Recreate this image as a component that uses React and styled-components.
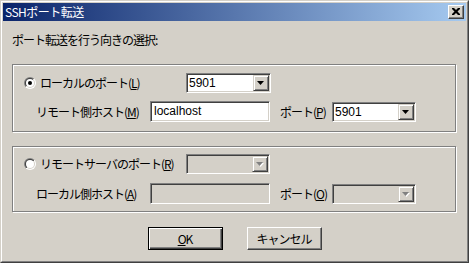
import styled, { createGlobalStyle } from "styled-components";

const GlobalStyle = createGlobalStyle`
  html, body {
    margin: 0;
    padding: 0;
    background: #ffffff;
  }
  body {
    font-family: "Noto Sans CJK JP", "Noto Sans", sans-serif;
    font-size: 12px;
    color: #000;
  }
`;

const Radio = ({ checked }) => (
  <RadioBox width="12" height="12" viewBox="0 0 12 12">
    <defs>
      <linearGradient id="rOuter" x1="0" y1="0" x2="1" y2="1">
        <stop offset="0.5" stopColor="#808080" />
        <stop offset="0.5" stopColor="#ffffff" />
      </linearGradient>
      <linearGradient id="rInner" x1="0" y1="0" x2="1" y2="1">
        <stop offset="0.5" stopColor="#404040" />
        <stop offset="0.5" stopColor="#d4d0c8" />
      </linearGradient>
    </defs>
    <circle cx="6" cy="6" r="6" fill="url(#rOuter)" />
    <circle cx="6" cy="6" r="5" fill="url(#rInner)" />
    <circle cx="6" cy="6" r="4" fill="#ffffff" />
    {checked && <circle cx="6" cy="6" r="2" fill="#000" />}
  </RadioBox>
);

const Combo = ({ value, disabled, width }) => (
  <ComboBox disabled={disabled} style={{ width }}>
    <ComboText>{value}</ComboText>
    <DropButton>
      <svg width="8" height="5" viewBox="0 0 8 5">
        {disabled && <path d="M1 1h7l-3.5 4z" fill="#ffffff" />}
        <path d="M0 0h7l-3.5 4z" fill={disabled ? "#808080" : "#000"} />
      </svg>
    </DropButton>
  </ComboBox>
);

export default function App() {
  return (
    <>
      <GlobalStyle />
      <Window>
        <Frame>
          <TitleBar>
            <TitleText>SSHポート転送</TitleText>
            <CloseButton>
              <svg width="8" height="7" viewBox="0 0 8 7">
                <path
                  d="M0 0h2l2 2 2-2h2v1l-2.5 2.5L8 6v1H6L4 5 2 7H0V6l2.5-2.5L0 1z"
                  fill="#000"
                />
              </svg>
            </CloseButton>
          </TitleBar>
          <Content>
            <Heading>ポート転送を行う向きの選択:</Heading>

            <Group top={8} gap={8} bottom={9}>
              <Row>
                <RadioCell>
                  <Radio checked />
                  <Label>
                    ローカルのポート(<u>L</u>)
                  </Label>
                </RadioCell>
                <Combo value="5901" width={85} />
              </Row>
              <Row>
                <SubLabel>
                  リモート側ホスト(<u>M</u>)
                </SubLabel>
                <Edit>localhost</Edit>
                <PortLabel>
                  ポート(<u>P</u>)
                </PortLabel>
                <Combo value="5901" width={84} />
              </Row>
            </Group>

            <Group top={7} gap={9} bottom={7} spaced>
              <Row>
                <RadioCell>
                  <Radio />
                  <Label>
                    リモートサーバのポート(<u>R</u>)
                  </Label>
                </RadioCell>
                <Combo value="" width={84} disabled />
              </Row>
              <Row>
                <SubLabel>
                  ローカル側ホスト(<u>A</u>)
                </SubLabel>
                <Edit disabled />
                <PortLabel>
                  ポート(<u>O</u>)
                </PortLabel>
                <Combo value="" width={84} disabled />
              </Row>
            </Group>

            <ButtonRow>
              <PushButton isDefault>
                <u>O</u>K
              </PushButton>
              <PushButton>キャンセル</PushButton>
            </ButtonRow>
          </Content>
        </Frame>
      </Window>
    </>
  );
}

const Window = styled.div`
  width: 469px;
  height: 263px;
  box-sizing: border-box;
  background: #d4d0c8;
  border: 1px solid;
  border-color: #d4d0c8 #404040 #404040 #d4d0c8;
  display: flex;
  flex-direction: column;
`;

const Frame = styled.div`
  flex: 1;
  border: 1px solid;
  border-color: #ffffff #808080 #808080 #ffffff;
  padding: 1px;
  display: flex;
  flex-direction: column;
`;

const TitleBar = styled.div`
  height: 18px;
  flex-shrink: 0;
  background: linear-gradient(to right, #0a246a, #a6caf0);
  display: flex;
  align-items: center;
  justify-content: space-between;
  padding: 0 2px 0 2px;
`;

const TitleText = styled.span`
  color: #ffffff;
  font-size: 12px;
  line-height: 14px;
  letter-spacing: -0.5px;
`;

const CloseButton = styled.div`
  width: 16px;
  height: 14px;
  box-sizing: border-box;
  background: #d4d0c8;
  border: 1px solid;
  border-color: #ffffff #404040 #404040 #ffffff;
  box-shadow: inset -1px -1px 0 #808080;
  display: flex;
  align-items: center;
  justify-content: center;
  padding-bottom: 1px;
`;

const Content = styled.div`
  display: flex;
  flex-direction: column;
  padding: 0 10px 0 9px;
`;

const Heading = styled.div`
  margin-top: 12px;
  height: 14px;
  line-height: 14px;
  letter-spacing: -1px;
`;

const Group = styled.div`
  margin-top: ${(p) => (p.spaced ? 14 : 17)}px;
  border: 1px solid #808080;
  box-shadow: inset 1px 1px 0 #ffffff, 1px 1px 0 #ffffff;
  padding: ${(p) => p.top}px 0 ${(p) => p.bottom}px 11px;
  display: flex;
  flex-direction: column;
  gap: ${(p) => p.gap}px;
`;

const Row = styled.div`
  display: flex;
  align-items: center;
`;

const RadioCell = styled.div`
  width: 162px;
  display: flex;
  align-items: center;
  gap: 4px;
`;

const RadioBox = styled.svg`
  display: block;
  flex-shrink: 0;
`;

const Label = styled.span`
  line-height: 14px;
  letter-spacing: -1px;
  white-space: nowrap;
`;

const SubLabel = styled(Label)`
  width: 114px;
  margin-left: 12px;
`;

const PortLabel = styled(Label)`
  width: 52px;
  margin-left: 10px;
`;

const Edit = styled.div`
  width: 120px;
  height: 21px;
  box-sizing: border-box;
  border: 1px solid;
  border-color: #808080 #ffffff #ffffff #808080;
  box-shadow: inset 1px 1px 0 #404040, inset -1px -1px 0 #d4d0c8;
  background: ${(p) => (p.disabled ? "#d4d0c8" : "#ffffff")};
  padding: 0 3px;
  line-height: 19px;
  font-family: "Liberation Sans", "Noto Sans", sans-serif;
  font-size: 12px;
`;

const ComboBox = styled.div`
  height: 20px;
  box-sizing: border-box;
  border: 1px solid;
  border-color: #808080 #ffffff #ffffff #808080;
  box-shadow: inset 1px 1px 0 #404040, inset -1px -1px 0 #d4d0c8;
  background: ${(p) => (p.disabled ? "#d4d0c8" : "#ffffff")};
  padding: 1px;
  display: flex;
  align-items: stretch;
`;

const ComboText = styled.span`
  flex: 1;
  padding-left: 1px;
  line-height: 16px;
  font-family: "Liberation Sans", "Noto Sans", sans-serif;
  font-size: 12px;
`;

const DropButton = styled.div`
  width: 16px;
  box-sizing: border-box;
  background: #d4d0c8;
  border: 1px solid;
  border-color: #d4d0c8 #404040 #404040 #d4d0c8;
  box-shadow: inset 1px 1px 0 #ffffff, inset -1px -1px 0 #808080;
  display: flex;
  align-items: center;
  justify-content: center;
  padding-top: 1px;
`;

const ButtonRow = styled.div`
  margin-top: 15px;
  display: flex;
  justify-content: center;
  gap: 24px;
  padding-left: 1px;
`;

const PushButton = styled.div`
  width: 75px;
  height: 23px;
  box-sizing: border-box;
  border: 1px solid;
  border-color: ${(p) =>
    p.isDefault ? "#000000" : "#ffffff #404040 #404040 #ffffff"};
  box-shadow: ${(p) =>
    p.isDefault
      ? "inset 1px 1px 0 #ffffff, inset -1px -1px 0 #404040, inset -2px -2px 0 #808080"
      : "inset -1px -1px 0 #808080"};
  display: flex;
  align-items: center;
  justify-content: center;
  line-height: 14px;
  letter-spacing: -1px;
  font-size: 12px;
`;
